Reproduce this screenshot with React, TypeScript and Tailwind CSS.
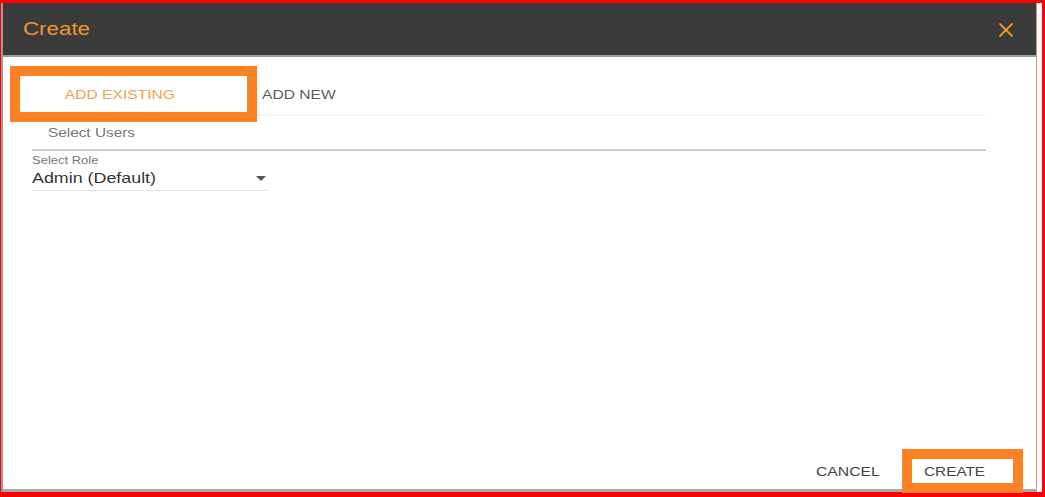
import { X } from "lucide-react";

export default function App() {
  return (
    <div
      className="relative h-[497px] w-[1045px] overflow-hidden bg-[#ff0000] pb-[5px] pl-[3px] pr-[3px] pt-[3px]"
      style={{ fontFamily: "'Liberation Sans', Arial, sans-serif" }}
    >
      <div className="flex h-full bg-white pr-[5px]">
        {/* Dialog */}
        <div className="flex h-full flex-1 flex-col border-b-[3px] border-r border-b-[#a9a9a9] border-r-[#f08080] shadow-[-2px_0_0_#9a9a9a]">
          {/* Header */}
          <div className="flex h-[54px] shrink-0 items-center justify-between border-b-2 border-[#9b9b9b] bg-[#3b3b3b] pl-5 pr-[18px] pt-[1px]">
            <span className="inline-block origin-left scale-x-[1.24] text-[18px] text-[#f0962a]">Create</span>
            <X size={24} strokeWidth={1.8} className="text-[#f0962a]" />
          </div>

          {/* Body */}
          <div className="flex flex-1 flex-col pl-[29px] pr-[50px] pt-[13px]">
            <div className="flex h-[46px] items-center border-b border-[#efefef] pt-[4px] text-[13px]">
              <div className="w-[176px] text-center">
                <span className="inline-block scale-x-[1.2] text-[#f5a04a]">ADD EXISTING</span>
              </div>
              <div className="pl-[54px]">
                <span className="inline-block origin-left scale-x-[1.2] text-[#5a5a5a]">ADD NEW</span>
              </div>
            </div>

            <div className="flex h-[35px] items-center border-b-2 border-[#cdcdcd] pl-4 pt-[1px] text-[13px]">
              <span className="inline-block origin-left scale-x-[1.18] text-[#777]">Select Users</span>
            </div>

            <div className="mt-[2px] w-[236px] border-b border-[#e2e2e2] pb-[1px]">
              <div className="text-[11px] leading-[14px] text-[#777]">
                <span className="inline-block origin-left scale-x-[1.18]">Select Role</span>
              </div>
              <div className="flex items-center justify-between pr-[2px] text-[15px] leading-[22px] text-[#333]">
                <span className="inline-block origin-left scale-x-[1.19]">Admin (Default)</span>
                <svg width="10" height="5" viewBox="0 0 10 5">
                  <path d="M0 0h10L5 5z" fill="#555" />
                </svg>
              </div>
            </div>

            {/* Footer */}
            <div className="mt-auto flex h-[35px] items-center justify-end gap-[44px] text-[13px] text-[#444]">
              <span className="w-[64px]">
                <span className="inline-block origin-left scale-x-[1.21]">CANCEL</span>
              </span>
              <span className="w-[62px]">
                <span className="inline-block origin-left scale-x-[1.18]">CREATE</span>
              </span>
            </div>
          </div>
        </div>
      </div>

      {/* annotation boxes */}
      <div className="absolute left-[10px] top-[66px] h-[56px] w-[247px] border-[10px] border-[#fd8226]" />
      <div className="absolute left-[902px] top-[449px] h-[44px] w-[121px] border-[10px] border-[#fd8226]" />
    </div>
  );
}
